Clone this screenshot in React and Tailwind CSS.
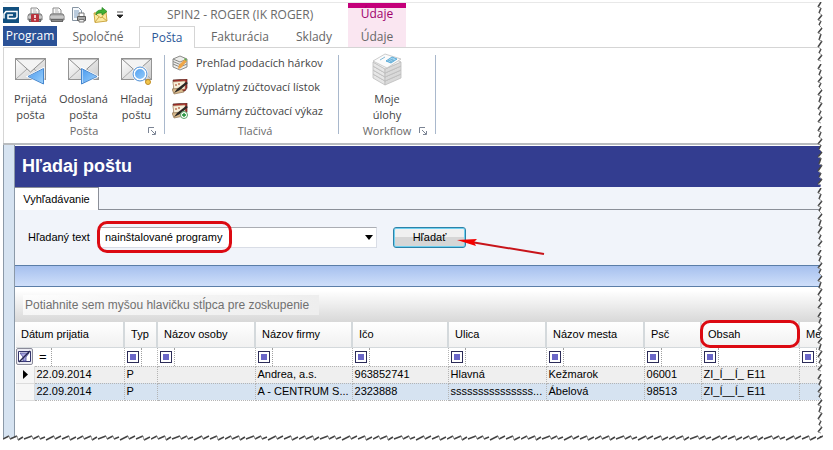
import { useState } from "react";

const columns = [
  { title: "Typ", width: "w-[33px]" },
  { title: "Názov osoby", width: "w-[98px]" },
  { title: "Názov firmy", width: "w-[97px]" },
  { title: "Ičo", width: "w-[96px]" },
  { title: "Ulica", width: "w-[98px]" },
  { title: "Názov mesta", width: "w-[98px]" },
  { title: "Psč", width: "w-[57px]" },
  { title: "Obsah", width: "w-[98px]", marked: true },
  { title: "Me", width: "" },
];

const rows = [
  ["22.09.2014", "P", "", "Andrea, a.s.", "963852741", "Hlavná", "Kežmarok", "06001", "ZI_Í__Í_ E11", ""],
  ["22.09.2014", "P", "", "A - CENTRUM S...", "2323888", "sssssssssssssss...", "Ábelová", "98513", "ZI_Í__Í_ E11", ""],
];

function Logo() {
  return (
    <svg width="16" height="16" viewBox="0 0 16 16">
      <rect width="16" height="16" fill="#12507f" />
      <path d="M1 11.500V7l2-2.500h11V10l-1.500 1.500H5V8h5" fill="none" stroke="#fff" strokeWidth="1.500" />
    </svg>
  );
}

function Printer({ red }) {
  return (
    <svg width="16" height="16" viewBox="0 0 16 16">
      <path d="M4 7V1h6l2 2v4z" fill="#fafafa" stroke="#8a8a8a" />
      <path d="M6 3h3M6 5h4" stroke="#b5b5b5" />
      <path d="M2 7h12l1 2v4H1V9z" fill="#b4b4b4" stroke="#767676" />
      <path d="M1 10h14" stroke="#ddd" />
      <rect x="2.500" y="12.500" width="11" height="2" fill="#8a8a8a" stroke="#666" />
      {red && <rect x="4" y="7" width="8" height="8" rx="1" fill="#b8323c" />}
      {red && <path d="M8 8v3M8 12v1.500" stroke="#fff" strokeWidth="1.500" />}
    </svg>
  );
}

function Preview() {
  return (
    <svg width="16" height="16" viewBox="0 0 16 16">
      <path d="M1.500 .5h6l3 3v10h-9z" fill="#f7fafd" stroke="#8795a3" />
      <path d="M3 4h5M3 6h6M3 8h4M3 10h3" stroke="#7d9cbd" />
      <path d="M8 10V6h5v4" fill="#fff" stroke="#777" />
      <path d="M6.500 9.500h8v4h-8z" fill="#a8a8a8" stroke="#5c5c5c" />
      <path d="M8 12.500h5v2.500h-5z" fill="#eee" stroke="#777" />
    </svg>
  );
}

function SendMail() {
  return (
    <svg width="16" height="16" viewBox="0 0 16 16">
      <path d="M1 6l12-1 1 9-12 1.500z" fill="#fbe9a0" stroke="#cda844" />
      <path d="M1 6l7 5 5-6M2 15l4-5M14 14l-5-4" fill="none" stroke="#cda844" />
      <path d="M3 8c0-4 2-5 6-5V.5L14 4.500 9 8V6C6 6 4 6 3 8z" fill="#41b035" stroke="#22841f" strokeWidth=".7" />
    </svg>
  );
}

function Envelope({ kind }) {
  return (
    <svg width="34" height="30" viewBox="0 0 34 30">
      <defs>
        <linearGradient id="paper" x1="0" y1="0" x2="1" y2="1">
          <stop offset="0" stopColor="#fff" />
          <stop offset="1" stopColor="#c9c9c9" />
        </linearGradient>
        <linearGradient id="glass" x1="0" y1="0" x2="1" y2="1">
          <stop offset="0" stopColor="#4c9cf0" />
          <stop offset="1" stopColor="#9bd0fb" />
        </linearGradient>
      </defs>
      <rect x="1.500" y="1.500" width="30" height="21" fill="url(#paper)" stroke="#949494" />
      <path d="M2 22l11-10M31 22l-11-10" stroke="#aaa" fill="none" />
      <path d="M2 2l14.500 13L31 2z" fill="#f3f3f3" stroke="#8e8e8e" strokeLinejoin="round" />
      {kind === "in" && (
        <path d="M15 19.500L29 12v14.500z" fill="url(#glass)" stroke="#fff" strokeWidth="3" paintOrder="stroke" />
      )}
      {kind === "in" && <path d="M14 19.500L29.500 11.500v15.500z" fill="none" stroke="#4486cf" />}
      {kind === "out" && (
        <path d="M15.500 12L29 19.500 15.500 26.500z" fill="url(#glass)" stroke="#fff" strokeWidth="3" paintOrder="stroke" />
      )}
      {kind === "out" && <path d="M14.500 11.500L30 19.500 14.500 27z" fill="none" stroke="#4486cf" />}
      {kind === "find" && (
        <g>
          <circle cx="20" cy="17" r="6.500" fill="url(#glass)" stroke="#fff" strokeWidth="3" />
          <circle cx="20" cy="17" r="7" fill="none" stroke="#4a8bd2" />
          <path d="M25 22l2 2" stroke="#999" strokeWidth="2" />
          <circle cx="28" cy="25" r="2.500" fill="#f2c64c" stroke="#c18e25" />
        </g>
      )}
    </svg>
  );
}

function Sheets() {
  return (
    <svg width="16" height="16" viewBox="0 0 16 16">
      <path d="M1 4l7-3 7 3v8l-7 3-7-3z" fill="#ececea" stroke="#8d8d8a" />
      <path d="M1 4l7 3 7-3M1 6.500l7 3 7-3M1 9l7 3 7-3" fill="none" stroke="#8a8a87" />
      <path d="M6 14l1-4 6-6 2 2-6 7z" fill="#efa648" />
      <path d="M12 4l1-1 2 2-1 1z" fill="#5fae52" />
    </svg>
  );
}

function Slip({ plus }) {
  return (
    <svg width="16" height="16" viewBox="0 0 16 16">
      <path d="M1 1l14-1v9l-2 3H2z" fill="#a72c28" stroke="#56302a" strokeWidth=".7" />
      <path d="M1 3l12-1v8l-11 1z" fill="#f7efda" stroke="#b79c76" strokeWidth=".6" />
      <path d="M3 6h2M6 5h2" stroke="#bf795f" strokeWidth="1.500" />
      <path d="M0 10l9-1 3 4-10 2z" fill="#d8b98c" stroke="#806342" strokeWidth=".6" />
      <path d="M2 14l3-4 9-7 2 1-8 7z" fill="#292725" />
      {plus && <circle cx="12" cy="12" r="3.500" fill="#fff" stroke="#56a364" />}
      {plus && <path d="M10 12h4M12 10v4" stroke="#168e32" strokeWidth="1.300" />}
    </svg>
  );
}

function PaperStack() {
  return (
    <svg width="34" height="34" viewBox="0 0 34 34">
      {[12, 8, 4, 0].map((y) => (
        <g key={y} fill="#f4f4f4" stroke="#bcbcbc" strokeWidth=".8">
          <path d={`M3 ${y + 9}l12 7v4L3 ${y + 13}z`} fill="#e6e6e6" />
          <path d={`M15 ${y + 16}l16-7v4l-16 7z`} fill="#d9d9d9" />
          <path d={`M3 ${y + 9}L16 ${y + 2}l15 7-16 7z`} />
        </g>
      ))}
      <path d="M3 8L15 1l16 5-14 9z" fill="#fbfbfb" stroke="#c0c0c0" strokeWidth=".8" />
      <path d="M16 8l6-4 5 2-6 4z" fill="#a9d8f2" stroke="#3f9dd2" strokeWidth=".8" />
      <path d="M18 8l5-2M20 9l4-2M10 7l5-3" stroke="#4f9cc6" strokeWidth=".7" />
    </svg>
  );
}

function Launcher() {
  return (
    <svg width="8" height="8" viewBox="0 0 8 8" fill="none" stroke="#7b8494">
      <path d="M.5 6V.5H6M3 3l4 4M7.500 4v3.500H4" />
    </svg>
  );
}

function Caret() {
  return (
    <svg width="8" height="5" viewBox="0 0 8 5" aria-hidden="true">
      <path d="M0 0h8L4 5z" fill="#000" />
    </svg>
  );
}

function RibbonGroup({ label, launcher, className, children }) {
  return (
    <section className={`flex ${className}`}>
      <div className="flex min-w-0 flex-1 flex-col">
        <div className="flex-1">{children}</div>
        <div className="flex items-center px-1 leading-4 text-[#6a6a6a]">
          <span className="w-3" />
          <span className="flex-1 text-center">{label}</span>
          <span className="w-3">
            {launcher && (
              <button aria-label={`${label} – možnosti`} className="block">
                <Launcher />
              </button>
            )}
          </span>
        </div>
      </div>
      <div className="mt-1 mb-[5px] w-px shrink-0 bg-[#a9b8cc]" />
    </section>
  );
}

function BigButton({ icon, top, bottom }) {
  return (
    <button className="flex w-[53px] flex-col items-center pt-[6px] leading-4 whitespace-nowrap">
      {icon}
      <span className="mt-1">{top}</span>
      <span>{bottom}</span>
    </button>
  );
}

function SmallButton({ icon, children }) {
  return (
    <button className="flex h-6 items-center gap-2 whitespace-nowrap">
      {icon}
      {children}
    </button>
  );
}

function FilterMark() {
  return (
    <div className="flex h-full w-[15px] items-center border-r border-dotted border-[#a0a0a0]">
      <button aria-label="Filter" className="flex size-3 items-center justify-center border border-[#2b2b57] bg-white">
        <span className="size-1.5 bg-[#6a66c8]" />
      </button>
    </div>
  );
}

function TornEdges() {
  return (
    <>
      <svg className="absolute top-0 right-0 h-full w-[6px]" aria-hidden="true">
        <pattern id="tornRight" width="6" height="62" patternUnits="userSpaceOnUse">
          <path d="M6 0H4L1 5l3 1-2 5 3 2-4 5 3 1-2 4 3 3-4 5 3 1-2 6 3 1-4 6 3 2-2 4 3 2-4 5 3 1-1 3h4z" fill="#fff" />
          <path
            d="M4 0L1 5M4 6l-2 5M5 13l-4 5M4 19l-2 4M5 26l-4 5M4 32l-2 6M5 39l-4 6M4 47l-2 4M5 53l-4 5"
            stroke="#444"
            strokeWidth="1.500"
          />
          <path d="M1 5l3 1M2 11l3 2M1 18l3 1M2 23l3 3M1 31l3 1M2 38l3 1M1 45l3 2M2 51l3 2M1 58l3 1" stroke="#999" />
        </pattern>
        <rect width="6" height="100%" fill="url(#tornRight)" />
      </svg>
      <svg className="absolute bottom-0 left-0 h-[6px] w-full" aria-hidden="true">
        <pattern id="tornBottom" width="74" height="6" patternUnits="userSpaceOnUse">
          <path d="M0 6V4l6-3 1 3 7-3 1 4 5-3 1 2 8-3 1 3 6-3 1 3 5-2 1 3 8-4 1 3 6-3 1 3 7-3 1 4 6-3v5z" fill="#fff" />
          <path
            d="M0 4l6-3M7 4l7-3M15 5l5-3M21 4l8-3M30 4l6-3M37 4l5-2M43 5l8-4M52 4l6-3M59 4l7-3M67 5l6-3"
            stroke="#444"
            strokeWidth="1.500"
          />
          <path d="M6 1l1 3M14 1l1 4M29 1l1 3M36 1l1 3M51 1l1 3M66 1l1 4" stroke="#999" />
        </pattern>
        <rect width="100%" height="6" fill="url(#tornBottom)" />
      </svg>
    </>
  );
}

function Ribbon() {
  return (
    <header className="border-b-2 border-[#b9bcbf] font-['Open_Sans',sans-serif] text-[11px] text-[#444]">
      <div className="flex h-6 border-t border-[#e8e8e8]">
        <div className="flex w-[345px] items-center">
          <Logo />
          <nav className="ml-2 flex items-center gap-1.5">
            <button aria-label="Tlač"><Printer red /></button>
            <button aria-label="Rýchla tlač"><Printer /></button>
            <button aria-label="Náhľad"><Preview /></button>
            <button aria-label="Odoslať"><SendMail /></button>
          </nav>
          <button aria-label="Prispôsobiť" className="ml-2">
            <svg width="6" height="8" viewBox="0 0 6 8">
              <path d="M0 1h6M0 4h6L3 7z" fill="#222" stroke="#222" strokeWidth=".8" />
            </svg>
          </button>
          <h1 className="ml-11 text-[12px] whitespace-nowrap text-[#6a6a6a]">SPIN2 - ROGER (IK ROGER)</h1>
        </div>
        <div className="w-[58px] border-t-[5px] border-[#c4007a] bg-[#fae6f1] text-center text-[12px] leading-3 text-[#a0006c]">
          Údaje
        </div>
      </div>

      <nav className="flex h-[22px] border-b border-[#d5d5d5] text-[12px] leading-5 text-[#666]">
        <div className="flex w-[345px]">
          <button className="mb-px w-[54px] bg-[#2b5297] text-white">Program</button>
          <button className="w-[82px]">Spoločné</button>
          <button className="-mb-px w-14 border-x border-t border-[#d5d5d5] bg-white text-[#2b5797]">Pošta</button>
          <button className="w-[90px]">Fakturácia</button>
          <button className="w-[58px]">Sklady</button>
        </div>
        <button className="w-[58px] bg-[#fae6f1]">Údaje</button>
      </nav>

      <div className="flex border-l border-[#d5d5d5] pt-[3px] pb-1">
        <RibbonGroup label="Pošta" launcher className="w-[161px]">
          <div className="flex">
            <BigButton icon={<Envelope kind="in" />} top="Prijatá" bottom="pošta" />
            <BigButton icon={<Envelope kind="out" />} top="Odoslaná" bottom="pošta" />
            <BigButton icon={<Envelope kind="find" />} top="Hľadaj" bottom="poštu" />
          </div>
        </RibbonGroup>
        <RibbonGroup label="Tlačivá" className="w-[174px] pl-[7px]">
          <SmallButton icon={<Sheets />}>Prehľad podacích hárkov</SmallButton>
          <SmallButton icon={<Slip />}>Výplatný zúčtovací lístok</SmallButton>
          <SmallButton icon={<Slip plus />}>Sumárny zúčtovací výkaz</SmallButton>
        </RibbonGroup>
        <RibbonGroup label="Workflow" launcher className="w-[97px]">
          <div className="flex justify-center">
            <BigButton icon={<div className="-mt-1"><PaperStack /></div>} top="Moje" bottom="úlohy" />
          </div>
        </RibbonGroup>
      </div>
    </header>
  );
}

function SearchForm() {
  const [text, setText] = useState("nainštalované programy");

  return (
    <form className="flex items-center bg-[#f1f4fa] py-[17px] pl-[13px]" onSubmit={(e) => e.preventDefault()}>
      <label htmlFor="query" className="w-[71px]">Hľadaný text</label>
      <div className="relative w-[278px]">
        <select
          id="query"
          value={text}
          onChange={(e) => setText(e.target.value)}
          className="block h-[21px] w-full appearance-none border border-[#d9dde6] border-t-[#abadb3] bg-white pl-[5px]"
        >
          <option>nainštalované programy</option>
        </select>
        <span className="pointer-events-none absolute top-2 right-1">
          <Caret />
        </span>
        <span className="pointer-events-none absolute -top-[6px] -left-[2px] h-8 w-[135px] rounded-[10px] border-[3px] border-[#dc0a12]" />
      </div>
      <div className="relative ml-4">
        <button className="block h-[21px] w-[73px] rounded-[3px] border border-[#2d82a8] bg-linear-to-b from-[#f0f0f0] from-50% to-[#d6d6d6] to-50% shadow-[inset_0_0_0_1px_#6fd0f0]">
          Hľadať
        </button>
        <svg className="pointer-events-none absolute top-3 left-16" width="88" height="18" viewBox="0 0 88 18" aria-hidden="true">
          <path d="M14 3l73 12" stroke="#c8141a" strokeWidth="2" />
          <path d="M0 1l20-1-3 3 2 4z" fill="#f40000" />
        </svg>
      </div>
    </form>
  );
}

function Grid() {
  const cell = "border-r border-b border-dotted border-[#b4b4b4] px-[2px]";

  return (
    <table className="w-full table-fixed border-collapse text-left">
      <colgroup>
        <col className="w-[18px]" />
        <col className="w-[90px]" />
        {columns.map((c) => (
          <col key={c.title} className={c.width} />
        ))}
      </colgroup>
      <thead>
        <tr className="h-[25px] bg-linear-to-b from-white to-[#f1f1f1]">
          <th colSpan={2} className="border-r-2 border-b border-[#d4d9dc] pl-[5px] font-normal">Dátum prijatia</th>
          {columns.map((c) => (
            <th key={c.title} className="relative border-r-2 border-b border-[#d4d9dc] pl-[6px] font-normal whitespace-nowrap last:border-r-0">
              {c.title}
              {c.marked && (
                <span className="pointer-events-none absolute -inset-x-[2px] -top-[2px] -bottom-px z-10 rounded-[10px] border-[3px] border-[#dc0a12]" />
              )}
            </th>
          ))}
        </tr>
      </thead>
      <tbody>
        <tr className="h-[19px]">
          <td className="p-0">
            <button aria-label="Zrušiť filter" className="flex size-[17px] items-center justify-center rounded-[2px] border border-[#8b8b99] bg-[#ececf3]">
              <svg width="13" height="13" viewBox="0 0 13 13">
                <path d="M.5 1.500h12v10H.5z" fill="#fff" stroke="#34346c" />
                <path d="M2 3h9L8 7v4H5V7z" fill="#a9a7e0" stroke="#4d4b9a" strokeWidth=".8" />
                <path d="M12 1L1 12" stroke="#25254f" strokeWidth="1.500" />
              </svg>
            </button>
          </td>
          <td className={`${cell} h-px py-0`}>
            <div className="flex h-full w-4 items-center border-r border-dotted border-[#a0a0a0] pl-[3px] text-[13px] leading-4">
              <button aria-label="Rovná sa">=</button>
            </div>
          </td>
          {columns.map((c) => (
            <td key={c.title} className={`${cell} h-px py-0`}>
              <FilterMark />
            </td>
          ))}
        </tr>
        {rows.map((row, i) => (
          <tr key={i} className={i === 0 ? "h-[17px] bg-[#efefef]" : "h-[17px] bg-[#d6e3f1]"}>
            <td className="border-r border-b border-[#dcdcdc] bg-[#f6f6f6] p-0">
              {i === 0 && (
                <svg className="ml-[6px]" width="6" height="9" viewBox="0 0 6 9" aria-label="Aktuálny riadok">
                  <path d="M1 0l5 4.500L1 9z" fill="#000" />
                </svg>
              )}
            </td>
            {row.map((value, j) => (
              <td key={j} className={`${cell} py-0 align-top leading-[14px] whitespace-nowrap`}>{value}</td>
            ))}
          </tr>
        ))}
      </tbody>
    </table>
  );
}

export default function App() {
  return (
    <div className="bg-white pt-[2px] pr-[10px] pb-[9px] pl-[3px]">
      <div className="relative overflow-hidden bg-white">
        <Ribbon />
        <div className="flex font-['Liberation_Sans',Arial,sans-serif] text-[11px] text-black">
          <div className="w-3 shrink-0 border-x border-[#8b99a8] bg-[#d6e3f1]" />
          <main className="min-w-0 flex-1 pt-px">
            <h2 className="bg-[#333d90] px-[7px] text-[18px] leading-[41px] font-bold text-white">Hľadaj poštu</h2>
            <div className="flex h-[23px] bg-[#f1f4fa]">
              <button className="w-[84px] border-t border-r border-[#8b8f98] bg-white">Vyhľadávanie</button>
              <div className="flex-1 border-b border-[#8b8f98]" />
            </div>
            <SearchForm />
            <div className="h-[22px] border-y border-[#5b7ea8] bg-linear-to-b from-[#a6c0ee] to-[#cfdffa]" />
            <div className="bg-linear-to-b from-white from-10% to-[#d8d8d8] pt-2 pb-[7px] pl-2">
              <p className="inline-block bg-linear-to-r from-white/70 to-[#eee] px-[2px] pr-[10px] align-top text-[12px] leading-5 text-[#707070]">
                Potiahnite sem myšou hlavičku stĺpca pre zoskupenie
              </p>
            </div>
            <div className="pb-10 pl-px">
              <Grid />
            </div>
          </main>
        </div>
        <TornEdges />
      </div>
    </div>
  );
}
